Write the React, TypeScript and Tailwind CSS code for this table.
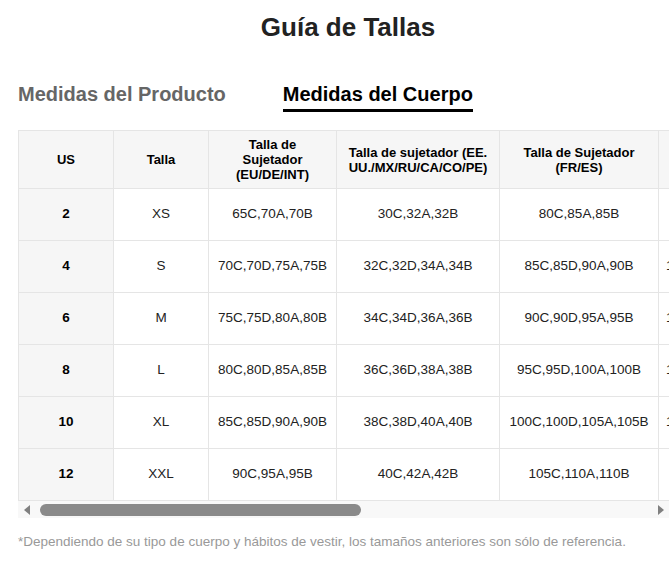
const headers = [
  { label: "US", w: "w-[95px]", px: "px-[8px]" },
  { label: "Talla", w: "w-[95px]", px: "px-[8px]" },
  { label: "Talla de Sujetador (EU/DE/INT)", w: "w-[128px]", px: "px-[12px]" },
  { label: "Talla de sujetador (EE. UU./MX/RU/CA/CO/PE)", w: "w-[163px]", px: "px-[8px]" },
  { label: "Talla de Sujetador (FR/ES)", w: "w-[159px]", px: "px-[8px]" },
  { label: "Talla de Sujetador (AU)", w: "w-[124px]", px: "px-[8px]" },
  { label: "Busto (cm)", w: "w-[163px]", px: "px-[8px]" },
  { label: "Bajo busto (cm)", w: "w-[163px]", px: "px-[8px]" },
  { label: "Cintura (cm)", w: "w-[163px]", px: "px-[8px]" },
];

const rows = [
  ["2", "XS", "65C,70A,70B", "30C,32A,32B", "80C,85A,85B", "8C,10A,10B", "78-82", "63-67", "60-64"],
  ["4", "S", "70C,70D,75A,75B", "32C,32D,34A,34B", "85C,85D,90A,90B", "10C,10D,12A,12B", "82-86", "68-72", "64-68"],
  ["6", "M", "75C,75D,80A,80B", "34C,34D,36A,36B", "90C,90D,95A,95B", "12C,12D,14A,14B", "86-90", "73-77", "68-72"],
  ["8", "L", "80C,80D,85A,85B", "36C,36D,38A,38B", "95C,95D,100A,100B", "14C,14D,16A,16B", "90-94", "78-82", "72-76"],
  ["10", "XL", "85C,85D,90A,90B", "38C,38D,40A,40B", "100C,100D,105A,105B", "16C,16D,18A,18B", "94-98", "83-87", "76-80"],
  ["12", "XXL", "90C,95A,95B", "40C,42A,42B", "105C,110A,110B", "18C,20A,20B", "98-102", "88-92", "80-84"],
];

export default function App() {
  return (
    <div className="w-full bg-white font-['Liberation_Sans',Arial,sans-serif] text-[#222]">
      <h1 className="pl-[27px] pt-[14px] text-center text-[26px] font-bold leading-[26px] text-[#222]">
        Guía de Tallas
      </h1>

      {/* Tabs */}
      <div className="mt-[42px] flex items-start gap-[57px] px-[18px]">
        <div className="text-[20px] font-bold leading-[24px] text-[#666]">Medidas del Producto</div>
        <div className="border-b-[3px] border-black pb-[3px] text-[20px] font-bold leading-[24px] text-black">
          Medidas del Cuerpo
        </div>
      </div>

      {/* Table */}
      <div className="ml-[18px] mt-[18px] w-[calc(100%-18px)] overflow-hidden">
        <table className="w-[1253px] table-fixed border-collapse">
          <colgroup>
            {headers.map((h) => (
              <col key={h.label} className={h.w} />
            ))}
          </colgroup>
          <thead>
            <tr className="h-[58px] bg-[#f6f6f6]">
              {headers.map((h) => (
                <th
                  key={h.label}
                  className={`border border-[#e5e5e5] ${h.px} text-center align-middle text-[13px] font-bold leading-[15px] text-black`}
                >
                  {h.label}
                </th>
              ))}
            </tr>
          </thead>
          <tbody>
            {rows.map((r) => (
              <tr key={r[0]} className="h-[52px]">
                {r.map((c, i) => (
                  <td
                    key={i}
                    className={
                      i === 0
                        ? "border border-[#e5e5e5] bg-[#f6f6f6] px-[8px] text-center text-[13.5px] font-bold text-black"
                        : "border border-[#e5e5e5] bg-white px-[4px] text-center text-[13.5px] text-[#222]"
                    }
                  >
                    {c}
                  </td>
                ))}
              </tr>
            ))}
          </tbody>
        </table>

        {/* scrollbar */}
        <div className="flex h-[17px] items-center bg-[#f8f8f8]">
          <div className="flex w-[17px] justify-center">
            <div className="h-0 w-0 border-y-[5px] border-r-[6px] border-y-transparent border-r-[#808080]" />
          </div>
          <div className="ml-[5px] h-[12px] w-[321px] rounded-full bg-[#8a8a8a]" />
          <div className="flex-1" />
          <div className="flex w-[17px] justify-center">
            <div className="h-0 w-0 border-y-[5px] border-l-[6px] border-y-transparent border-l-[#808080]" />
          </div>
        </div>
      </div>

      <p className="mt-[16px] px-[18px] pb-[11px] text-[13.5px] leading-[16px] text-[#999]">
        *Dependiendo de su tipo de cuerpo y hábitos de vestir, los tamaños anteriores son sólo de referencia.
      </p>
    </div>
  );
}
